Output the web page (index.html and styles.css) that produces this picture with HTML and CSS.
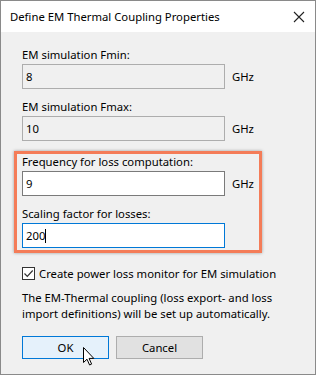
FILE: index.html
```html
<!DOCTYPE html>
<html lang="en">
<head>
    <meta charset="UTF-8">
    <title>Define EM Thermal Coupling Properties</title>
    <link rel="stylesheet" href="styles.css">
</head>
<body>
    <div class="dialog">
        <div class="title-bar">
            <span class="title">Define EM Thermal Coupling Properties</span>
            <svg class="close" width="12" height="12" viewBox="0 0 12 12">
                <path d="M1 1 L11 11 M11 1 L1 11" stroke="#222" stroke-width="1.1" fill="none"/>
            </svg>
        </div>

        <div class="content">
            <div class="field">
                <label>EM simulation Fmin:</label>
                <div class="row">
                    <div class="input disabled">8</div>
                    <span class="unit">GHz</span>
                </div>
            </div>
            <div class="field">
                <label>EM simulation Fmax:</label>
                <div class="row">
                    <div class="input disabled">10</div>
                    <span class="unit">GHz</span>
                </div>
            </div>

            <!-- highlighted group -->
            <div class="highlight">
                <div class="field">
                    <label>Frequency for loss computation:</label>
                    <div class="row">
                        <div class="input">9</div>
                        <span class="unit">GHz</span>
                    </div>
                </div>
                <div class="field">
                    <label>Scaling factor for losses:</label>
                    <div class="row">
                        <div class="input focused">200<span class="caret"></span></div>
                    </div>
                </div>
            </div>

            <div class="check-row">
                <span class="checkbox">
                    <svg width="11" height="11" viewBox="0 0 11 11">
                        <path d="M1.5 5.5 L4.3 8.3 L9.7 2.5" stroke="#333" stroke-width="1.2" fill="none"/>
                    </svg>
                </span>
                <span>Create power loss monitor for EM simulation</span>
            </div>

            <p class="note">The EM-Thermal coupling (loss export- and loss import definitions) will be set up automatically.</p>

            <div class="buttons">
                <button class="btn default">OK</button>
                <button class="btn">Cancel</button>
            </div>
        </div>

        <!-- mouse pointer -->
        <svg class="pointer" width="12" height="19" viewBox="0 0 12 19">
            <path d="M0.5 0.5 L0.5 15.5 L4 12.2 L6.6 18 L8.6 17.1 L6.1 11.4 L10.8 11.4 Z" fill="#fff" stroke="#000" stroke-width="1"/>
        </svg>
    </div>
</body>
</html>
```

FILE: styles.css
```css
/* dialog */
body {
    margin: 0;
    background: #ffffff;
    font-family: 'Noto Sans', 'Open Sans', sans-serif;
    font-size: 11.3px;
    color: #000;
}

.dialog {
    position: relative;
    width: 314px;
    height: 373px;
    border: 1px solid #8a8a8a;
    background: #f0f0f0;
}

.title-bar {
    height: 31px;
    background: #fff;
    display: flex;
    align-items: center;
    justify-content: space-between;
    padding: 0 10px 0 9px;
}

.close {
    margin-top: 1px;
}

.content {
    padding: 15px 0 0 21px;
}

/* fields */
.field {
    margin-bottom: 10px;
}

.field label {
    display: block;
    line-height: 15px;
    margin-bottom: 2px;
}

.row {
    display: flex;
    align-items: center;
}

.input {
    width: 195px;
    height: 23px;
    line-height: 23px;
    padding: 0 3px;
    border: 1px solid #7a7a7a;
    background: #fff;
}

.input.disabled {
    background: #f0f0f0;
    border-color: #adadad;
}

.input.focused {
    border-color: #0078d7;
}

.caret {
    display: inline-block;
    width: 1px;
    height: 14px;
    background: #000;
    vertical-align: -3px;
}

.unit {
    margin-left: 7px;
}

/* orange highlight */
.highlight {
    width: 237px;
    margin: 0 0 0 -8px;
    padding: 0 0 0 5px;
    border: 3px solid #f47c58;
    box-shadow: 0 0 3px rgba(0, 0, 0, 0.35);
}

.highlight .field:last-child {
    margin-bottom: 2px;
}

/* checkbox */
.check-row {
    display: flex;
    align-items: center;
    margin-top: 13px;
    line-height: 15px;
}

.checkbox {
    width: 11px;
    height: 11px;
    border: 1px solid #333;
    background: #fff;
    margin-right: 4px;
    display: flex;
}

.note {
    margin: 9px 0 0;
    width: 270px;
    line-height: 16px;
}

/* buttons */
.buttons {
    display: flex;
    gap: 7px;
    margin-top: 14px;
}

.btn {
    width: 87px;
    height: 23px;
    padding: 0;
    font-family: inherit;
    font-size: 11.3px;
    color: #000;
    background: #e1e1e1;
    border: 1px solid #adadad;
}

.btn.default {
    background: #e5f1fb;
    border-color: #0078d7;
}

.pointer {
    position: absolute;
    left: 82px;
    top: 346px;
}
```
